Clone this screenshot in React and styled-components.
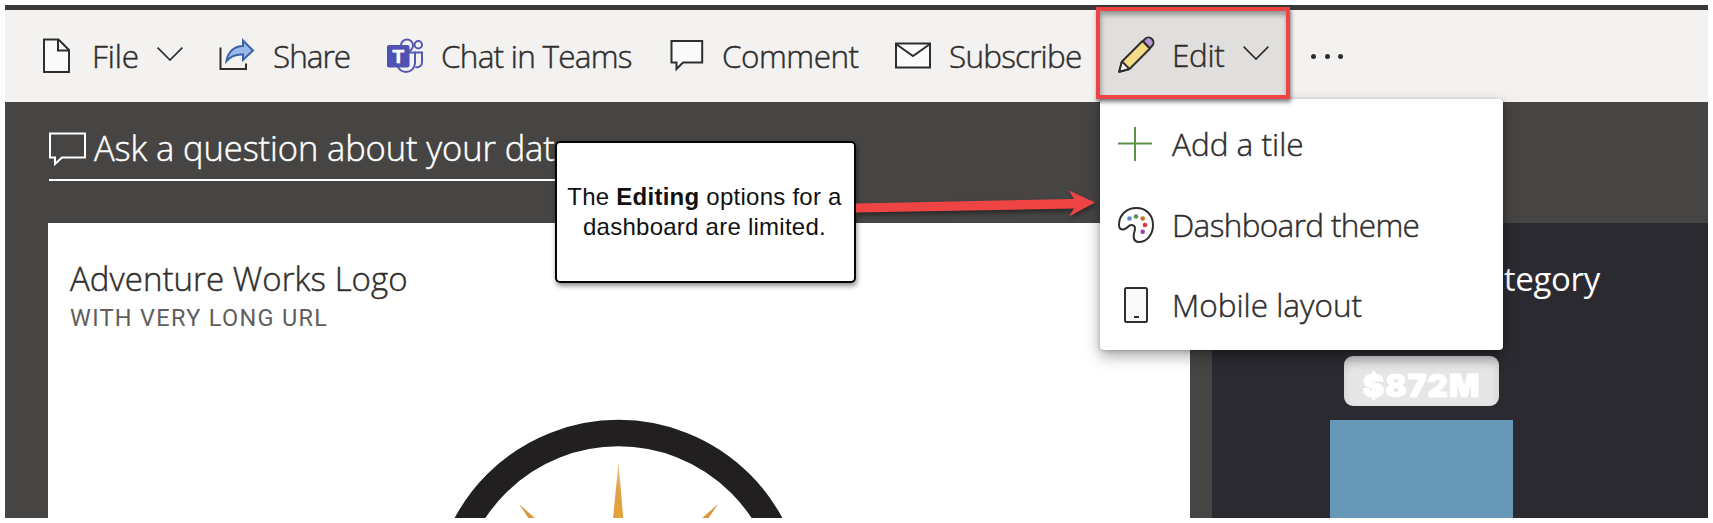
import React from 'react';
import styled, { createGlobalStyle } from 'styled-components';

const Global = createGlobalStyle`
  body { margin: 0; background: #fff; overflow: hidden; }
  * { box-sizing: border-box; }
`;
const ui = `'Open Sans', 'Noto Sans', sans-serif`;

const Page = styled.div`
  width: 1713px; height: 523px; padding: 5px 5px 5.5px; background: #fff;
  font-family: ${ui}; font-weight: 300; color: #2f2e2d;
`;
const Frame = styled.main`
  position: relative; width: 1703px; height: 512.5px; overflow: hidden;
  display: flex; flex-direction: column; background: #474543;
`;
const Toolbar = styled.header`
  height: 97px; flex: none; display: flex; align-items: stretch;
  border-top: 5px solid #3a3938; background: #f3f2f1; padding-left: 33px;
`;
const Item = styled.div`
  width: ${p => p.$width}px; flex: none; display: flex; align-items: center; gap: 18px;
`;
const EditItem = styled(Item)`
  position: relative; z-index: 4; height: 92px; margin-top: -3px;
  padding: 4px 0 0 18px; border: 4px solid #ef4444; background: #e1dfdd;
  box-shadow: 1px 3px 4px rgba(0,0,0,.5), inset 1px 4px 5px rgba(0,0,0,.32);
`;
const Label = styled.span`
  font-size: 31.5px; line-height: 42px; white-space: nowrap; letter-spacing: ${p => p.$track || 0}px;
  -webkit-text-stroke: .45px currentColor;
`;
const Chevron = styled.svg`
  width: 26px; height: 14px; margin-left: ${p => p.$gap}px; flex: none; margin-top: -4px;
`;
const More = styled.div`
  display: flex; align-items: center; gap: 8.5px; padding-left: 21px;
`;
const Dot = styled.i` width: 5px; height: 5px; border-radius: 50%; background: #2f2e2d; `;

const AskBar = styled.section`
  width: 700px; height: 79px; margin-left: 44px; flex: none; display: flex; align-items: center;
  gap: 9px; padding-top: 14px; border-bottom: 2px solid #fff; color: #fff;
`;
const AskText = styled.span`
  font-size: 34.5px; line-height: 46px; white-space: nowrap; letter-spacing: ${p => p.$track}px;
  -webkit-text-stroke: .45px currentColor;
`;
const Tiles = styled.section`
  flex: 1; display: flex; gap: 22px; margin-top: 42px; padding-left: 43px;
`;
const LogoTile = styled.article`
  width: 1142px; flex: none; background: #fff; padding: 34px 0 0 22px;
  display: flex; flex-direction: column; overflow: hidden;
`;
const Title = styled.h2`
  margin: 0; font-weight: 300; font-size: 33px; line-height: 44px; white-space: nowrap;
  letter-spacing: ${p => p.$track}px; -webkit-text-stroke: .45px currentColor;
`;
const Subtitle = styled.div`
  margin-top: 2px; font-family: Roboto, sans-serif; font-weight: 400; font-size: 23.5px; line-height: 30px; color: #605e5c;
  letter-spacing: ${p => p.$track}px;
`;
const Compass = styled.svg` width: 400px; height: 102px; margin: 84px 0 0 348px; flex: none; `;
const ChartTile = styled.article`
  flex: 1; background: #2b2a31; color: #fff; padding: 34px 0 0 118px;
  display: flex; flex-direction: column; align-items: flex-start;
`;
const ChartTitle = styled(Title)`
  width: 270px; text-align: right; font-weight: 400; -webkit-text-stroke: 0;
`;
const Value = styled.div`
  width: 155px; height: 50px; margin: 55px 0 14px 14px; border-radius: 9px; background: #e6e6e6;
  font: 900 32px/59px Inter, sans-serif; text-align: center; letter-spacing: ${p => p.$track}px;
  -webkit-text-stroke: 1px #fff; box-shadow: inset 0 6px 9px rgba(0,0,0,.13);
`;
const Bar = styled.div` width: 183px; flex: 1; background: #6798b8; `;

const Menu = styled.nav`
  position: absolute; z-index: 3; left: 1095px; top: 94px; width: 403px; height: 251px;
  padding-top: 5px; border-radius: 4px; background: #fff;
  box-shadow: 0 6px 15px rgba(0,0,0,.34), 0 1px 4px rgba(0,0,0,.2);
`;
const MenuItem = styled.div`
  height: 80.5px; display: flex; align-items: center; gap: 18px; padding-left: 18px;
`;
const Callout = styled.aside`
  position: absolute; z-index: 2; left: 550px; top: 136px; width: 301px; height: 142px;
  border: 2px solid #050505; border-radius: 5px; background: #fff; color: #111;
  display: flex; align-items: center; justify-content: center; text-align: center;
  font: 24px/29.6px 'Liberation Sans', Arial, sans-serif; letter-spacing: .25px; white-space: nowrap;
  padding-right: 2px;
  box-shadow: 1px 3px 5px rgba(0,0,0,.45);
`;
const Arrow = styled.svg`
  position: absolute; z-index: 4; left: 850px; top: 180px; width: 245px; height: 40px;
  filter: drop-shadow(1px 3px 2px rgba(0,0,0,.4));
`;
const Icon = styled.svg.attrs({ viewBox: '0 0 36 36', fill: 'none' })`
  width: 36px; height: 36px; flex: none; overflow: visible; stroke: ${p => p.$color || '#2f2e2d'};
  stroke-width: 2;
`;

const FileIcon = () => (
  <Icon><path fill="#fafafa" d="M6 1.5h14.5L31 12v22H6z" /><path d="M20 1.5V12.5H31" /></Icon>
);
const ShareIcon = () => (
  <Icon>
    <path d="M1.5 9.500V31H27V25.5" />
    <path fill="#98b8ea" stroke="#3b62a4" strokeLinejoin="miter" d="M7.5 23C9 13 16 8 24 8V2.500L34 12.500L24 22V16.500C17 16 12 18 7.500 23Z" />
  </Icon>
);
const TeamsLetter = styled.text`
  font: 700 19px 'Liberation Sans', sans-serif; fill: #fff; stroke: #fff; stroke-width: .6px;
`;
const TeamsIcon = () => (
  <Icon $color="#5558af">
    <circle cx="20" cy="7.5" r="6" fill="#f3f2f1" /><circle cx="31.3" cy="6.800" r="3.7" />
    <path d="M28 14.5H35V24a5 5 0 0 1-6.5 5" /><path fill="#f3f2f1" d="M10 14.5H28V25a9 9 0 0 1-18 0z" />
    <rect x="0" y="7" width="22.5" height="22.500" rx="2" fill="#4f52b2" stroke="none" />
    <TeamsLetter x="5.5" y="25">T</TeamsLetter>
  </Icon>
);
const CommentIcon = () => (
  <Icon><path fill="#fafafa" d="M3.5 3H34.2V24.5H15L8.5 31V24.5H3.5z" /></Icon>
);
const MailIcon = () => (
  <Icon><path fill="#fafafa" d="M1 5.5H35V29.5H1z" /><path d="M1 6l17 12L35 6" /></Icon>
);
const PencilIcon = () => (
  <Icon strokeLinejoin="round">
    <path fill="#f3dc85" d="M4 24.5L24.5 4L32 11.5L11.5 32L1.2 34.8z" />
    <path fill="#fff" stroke="none" d="M4.5 25.5L10.8 31.3L2.2 33.8z" />
    <path d="M4 24.5L11.5 32M3.8 24.5L1.2 34.8L11.5 32" />
    <path fill="#b994d8" d="M25 4l2-2a4.5 4.5 0 0 1 7 7l-2.3 2.3z" />
  </Icon>
);
const PlusIcon = () => (<Icon $color="#5c9149"><path d="M17 1V35M0 17.5H34" /></Icon>);
const PaletteIcon = () => (
  <Icon>
    <path d="M18.5 1C8.5 1 1 8 1 18c0 3 1.5 4.5 4 4.5 4 0 5-5 9-4.5 3.5.5 3.5 4 2.2 7.5-1.3 4.5-.5 9.5 4.3 9.5C29 35 35 27.5 35 18 35 8 28 1 18.5 1z" />
    <g stroke="none">
      <circle cx="11.5" cy="11.5" r="2.3" fill="#5b86d1" /><circle cx="18" cy="9.5" r="2.3" fill="#58954d" />
      <circle cx="24.7" cy="11.5" r="2.3" fill="#cf6c20" /><circle cx="27" cy="18" r="2.3" fill="#dc3740" />
      <circle cx="24.7" cy="24.7" r="2.3" fill="#9641b0" />
    </g>
  </Icon>
);
const PhoneIcon = () => (
  <Icon><rect x="7" y="1" width="22" height="34" rx="1.5" fill="#fafafa" /><path d="M16 30h5" /></Icon>
);
const AskIcon = () => (
  <Icon $color="#fff"><path d="M1 3.5H36V27.5H13L6 34V27.5H1z" /></Icon>
);
const Down = ({ gap }) => (
  <Chevron $gap={gap} viewBox="0 0 26 14" fill="none" stroke="#2f2e2d" strokeWidth="1.7"><path d="M.6.7L13 13L25.4.7" /></Chevron>
);

export default function App() {
  return (
    <Page>
      <Global />
      <Frame>
        <Toolbar>
          <Item $width={181}><FileIcon /><Label $track={-0.1}>File</Label><Down gap={0.5} /></Item>
          <Item $width={168}><ShareIcon /><Label $track={-1}>Share</Label></Item>
          <Item $width={281}><TeamsIcon /><Label $track={-0.75}>Chat in Teams</Label></Item>
          <Item $width={227}><CommentIcon /><Label $track={-0.5}>Comment</Label></Item>
          <Item $width={201}><MailIcon /><Label $track={-0.8}>Subscribe</Label></Item>
          <EditItem $width={194}><PencilIcon /><Label $track={-0.3}>Edit</Label><Down gap={0.5} /></EditItem>
          <More><Dot /><Dot /><Dot /></More>
        </Toolbar>
        <AskBar><AskIcon /><AskText $track={-0.1}>Ask a question about your data</AskText></AskBar>
        <Tiles>
          <LogoTile>
            <Title $track={0.05}>Adventure Works Logo</Title>
            <Subtitle $track={1.3}>WITH VERY LONG URL</Subtitle>
            <Compass viewBox="418 417 400 102">
              <defs>
                <linearGradient id="needle" x2="0" y2="1"><stop stopColor="#efcf96" /><stop offset=".5" stopColor="#dfa246" /><stop offset="1" stopColor="#e3a238" /></linearGradient>
              </defs>
              <circle cx="618.5" cy="605.7" r="172.6" fill="none" stroke="#221f20" strokeWidth="26.5" />
              <path fill="url(#needle)" d="M618.5 462L623.3 519H613z" />
              <path fill="#d99a3f" d="M519 504L536 519H529zM718 504L701 519H708z" />
            </Compass>
          </LogoTile>
          <ChartTile>
            <ChartTitle $track={-0.3}>Sales by Category</ChartTitle>
            <Value $track={0.8}>$872M</Value>
            <Bar />
          </ChartTile>
        </Tiles>
        <Menu>
          <MenuItem><PlusIcon /><Label>Add a tile</Label></MenuItem>
          <MenuItem><PaletteIcon /><Label $track={-0.64}>Dashboard theme</Label></MenuItem>
          <MenuItem><PhoneIcon /><Label>Mobile layout</Label></MenuItem>
        </Menu>
        <Callout><div>The <b>Editing</b> options for a<br />dashboard are limited.</div></Callout>
        <Arrow viewBox="855 184.5 245 40"><path fill="#ef4444" d="M856 203L1074 198.5L1069 190L1095 202L1069 216L1074 208L856 212z" /></Arrow>
      </Frame>
    </Page>
  );
}
